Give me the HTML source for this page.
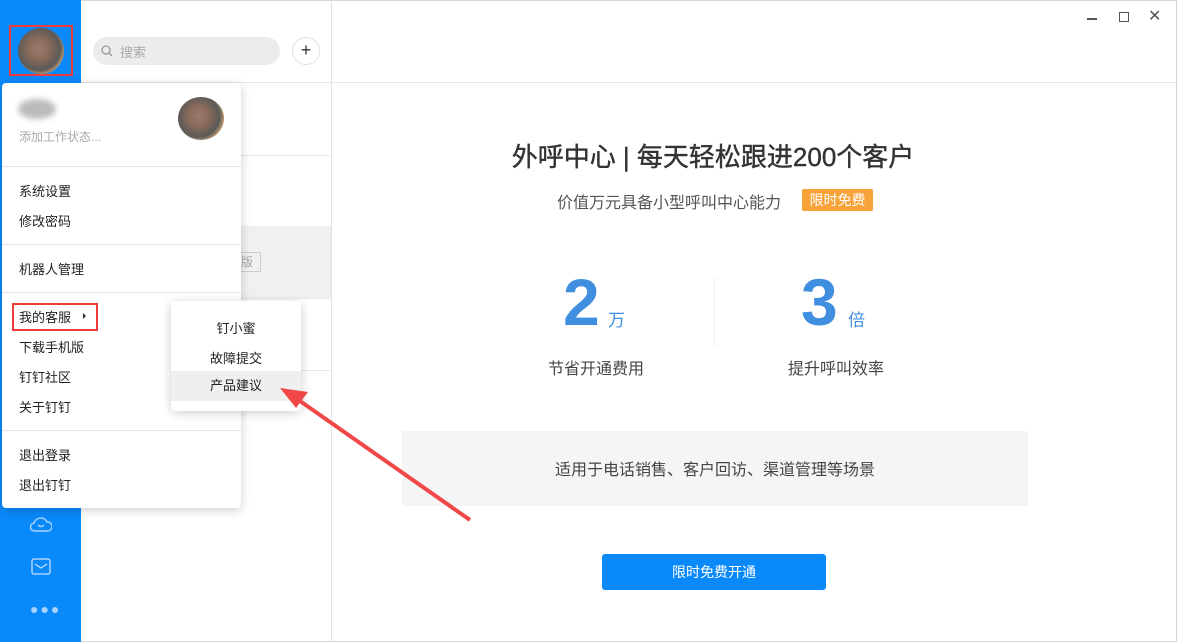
<!DOCTYPE html>
<html><head><meta charset="utf-8"><style>
*{margin:0;padding:0;box-sizing:border-box}
body{width:1177px;height:642px;overflow:hidden;background:#fff;font-family:"Liberation Sans","Noto Sans CJK SC",sans-serif;position:relative;color:#333}
.a{position:absolute}
.side{left:0;top:0;width:81px;height:642px;background:#0a89fb}
.av{border-radius:50%;background:radial-gradient(circle at 45% 45%,#9a7a6a 0,#8a6a5a 30%,#5a5a58 60%,#c8a070 75%,#ddd 88%,transparent 92%)}
.mi{position:absolute;left:19px;font-size:13px;color:#222}
.sep{position:absolute;left:0;width:239px;height:1px;background:#e3e3e3}
</style></head><body>
<div class="a" style="left:0;top:0;width:1177px;height:642px;border:1px solid #d8d8d8;border-left:none"></div>
<div class="a side"></div>
<div class="a" style="left:9px;top:25px;width:64px;height:51px;border:2px solid #ef3a3a"></div>
<div class="a av" style="left:18px;top:28px;width:46px;height:46px"></div>
<svg class="a" style="left:30px;top:514px" width="22" height="20" viewBox="0 0 22 20"><path d="M5 17a4 4 0 0 1-1-8 7 7 0 0 1 13-1 4.5 4.5 0 0 1 1 9z" fill="none" stroke="#a9d3ff" stroke-width="1.5"/><path d="M8 11q3 3 6 0" fill="none" stroke="#a9d3ff" stroke-width="1.5"/></svg>
<svg class="a" style="left:31px;top:558px" width="20" height="17" viewBox="0 0 20 17"><rect x="1" y="1" width="18" height="15" rx="2" fill="none" stroke="#a9d3ff" stroke-width="1.5"/><path d="M4 6l6 4 6-4" fill="none" stroke="#a9d3ff" stroke-width="1.5"/></svg>
<div class="a" style="left:30px;top:601px;color:#a9d3ff;font-size:14px;letter-spacing:2px">●●●</div>
<div class="a" style="left:331px;top:0;width:1px;height:642px;background:#e3e3e3"></div>
<div class="a" style="left:81px;top:82px;width:1095px;height:1px;background:#e8e8e8"></div>
<div class="a" style="left:93px;top:37px;width:187px;height:28px;border-radius:14px;background:#ececee"></div>
<svg class="a" style="left:101px;top:45px" width="12" height="12"><circle cx="5" cy="5" r="4" fill="none" stroke="#999" stroke-width="1.3"/><path d="M8 8l3 3" stroke="#999" stroke-width="1.3"/></svg>
<div class="a" style="left:120px;top:42px;font-size:13px;color:#aaa">搜索</div>
<div class="a" style="left:292px;top:37px;width:28px;height:28px;border-radius:50%;border:1px solid #e0e0e0;text-align:center;line-height:25px;font-size:18px;color:#333">+</div>
<div class="a" style="left:81px;top:155px;width:250px;height:1px;background:#e8e8e8"></div>
<div class="a" style="left:81px;top:226px;width:250px;height:72px;background:#f0f0f2"></div>
<div class="a" style="left:236px;top:252px;width:25px;height:20px;border:1px solid #ccc;font-size:12px;color:#aaa;padding-left:4px">版</div>
<div class="a" style="left:81px;top:298px;width:250px;height:1px;background:#e8e8e8"></div>
<div class="a" style="left:81px;top:370px;width:250px;height:1px;background:#e8e8e8"></div>
<div class="a" style="left:1087px;top:18px;width:10px;height:1.5px;background:#555"></div>
<div class="a" style="left:1119px;top:12px;width:10px;height:10px;border:1.5px solid #555"></div>
<div class="a" style="left:1148px;top:6px;font-size:16px;color:#555">✕</div>
<!-- content -->
<div class="a" style="left:332px;top:137px;width:762px;text-align:center;font-size:26px;color:#333;-webkit-text-stroke:0.4px #333">外呼中心 | 每天轻松跟进200个客户</div>
<div class="a" style="left:557px;top:189px;font-size:16px;color:#555">价值万元具备小型呼叫中心能力</div>
<div class="a" style="left:802px;top:189px;width:71px;height:22px;background:#f8a33a;color:#fff;font-size:14px;text-align:center;line-height:22px;border-radius:2px">限时免费</div>
<div class="a" style="left:563px;top:262px;font-size:66px;color:#3f8ee0;font-weight:bold;line-height:80px">2</div>
<div class="a" style="left:608px;top:306px;font-size:17px;color:#3f8ee0">万</div>
<div class="a" style="left:801px;top:262px;font-size:66px;color:#3f8ee0;font-weight:bold;line-height:80px">3</div>
<div class="a" style="left:848px;top:306px;font-size:17px;color:#3f8ee0">倍</div>
<div class="a" style="left:714px;top:277px;width:1px;height:70px;background:#eee"></div>
<div class="a" style="left:548px;top:355px;font-size:16px;color:#444">节省开通费用</div>
<div class="a" style="left:788px;top:355px;font-size:16px;color:#444">提升呼叫效率</div>
<div class="a" style="left:402px;top:431px;width:626px;height:75px;background:#f5f5f5;text-align:center;line-height:80px;font-size:16px;color:#444">适用于电话销售、客户回访、渠道管理等场景</div>
<div class="a" style="left:602px;top:554px;width:224px;height:36px;background:#0a89fb;border-radius:3px;color:#fff;font-size:14px;text-align:center;line-height:36px">限时免费开通</div>
<!-- menu -->
<div class="a" style="left:2px;top:83px;width:239px;height:425px;background:#fff;border-radius:4px;box-shadow:0 2px 10px rgba(0,0,0,.2)">
<div class="a" style="left:16px;top:16px;width:38px;height:20px;border-radius:50%;background:#bbb;filter:blur(3px)"></div>
<div class="a" style="left:17px;top:45px;font-size:12px;color:#aaa">添加工作状态...</div>
<div class="a av" style="left:176px;top:14px;width:46px;height:43px"></div>
<div class="sep" style="top:83px"></div>
<div class="mi" style="left:17px;top:98px">系统设置</div>
<div class="mi" style="left:17px;top:128px">修改密码</div>
<div class="sep" style="top:161px"></div>
<div class="mi" style="left:17px;top:176px">机器人管理</div>
<div class="sep" style="top:209px"></div>
<div class="a" style="left:10px;top:220px;width:86px;height:28px;border:2px solid #ef3a3a"></div>
<div class="mi" style="left:17px;top:224px">我的客服</div>
<div class="a" style="left:81px;top:230px;width:0;height:0;border-left:3px solid #333;border-top:3px solid transparent;border-bottom:3px solid transparent"></div>
<div class="mi" style="left:17px;top:254px">下载手机版</div>
<div class="mi" style="left:17px;top:284px">钉钉社区</div>
<div class="mi" style="left:17px;top:314px">关于钉钉</div>
<div class="sep" style="top:347px"></div>
<div class="mi" style="left:17px;top:362px">退出登录</div>
<div class="mi" style="left:17px;top:392px">退出钉钉</div>
</div>
<div class="a" style="left:171px;top:301px;width:130px;height:110px;background:#fff;border-radius:4px;box-shadow:0 2px 10px rgba(0,0,0,.2);font-size:13px;text-align:center;color:#222">
<div style="position:absolute;top:17px;width:100%">钉小蜜</div>
<div style="position:absolute;top:47px;width:100%">故障提交</div>
<div style="position:absolute;top:70px;width:100%;height:30px;line-height:30px;background:#efefef">产品建议</div>
</div>
<svg class="a" style="left:270px;top:380px" width="210" height="145"><path d="M200 140L20 14" stroke="#f04848" stroke-width="4"/><path d="M10 8l28 4-12 16z" fill="#f04848"/></svg>
</body></html>
